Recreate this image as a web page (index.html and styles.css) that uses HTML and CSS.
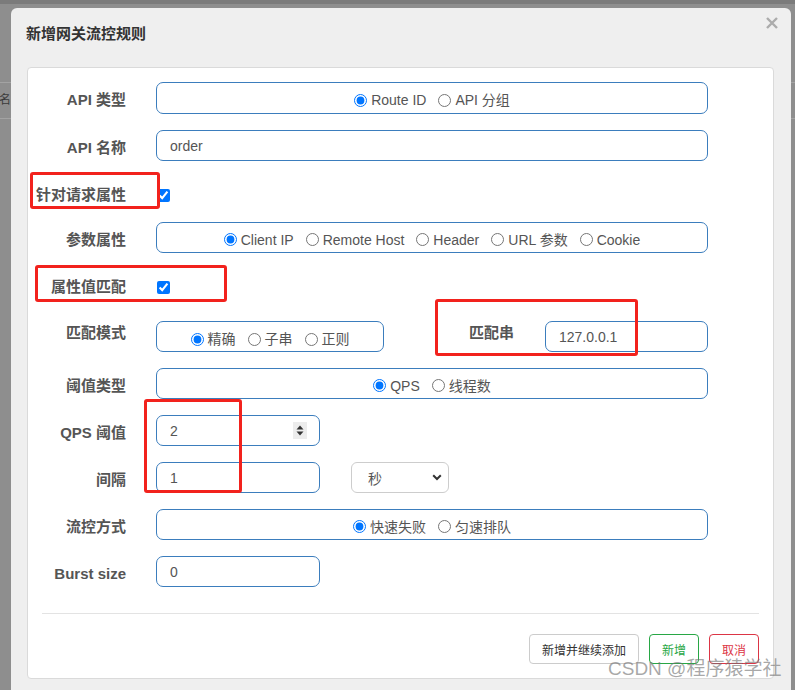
FILE: index.html
```html
<!DOCTYPE html>
<html>
<head>
<meta charset="utf-8">
<link rel="stylesheet" href="styles.css">
</head>
<body>
<div class="backdrop">
  <div class="bg-top"></div>
  <div class="bg-gap"></div>
  <div class="bg-head">名称</div>
</div>

<div class="modal">
  <div class="modal-header">
    <h4 class="modal-title">新增网关流控规则</h4>
    <svg class="close" width="12" height="12" viewBox="0 0 12 12"><path d="M1 1 L11 11 M11 1 L1 11" stroke="#acacac" stroke-width="2.4" fill="none"/></svg>
  </div>
  <div class="panel">
    <div class="form">
      <div class="row first">
        <label class="lbl">API 类型</label>
        <div class="box grow radios">
          <label class="opt"><input type="radio" name="apiType" checked>Route ID</label>
          <label class="opt"><input type="radio" name="apiType">API 分组</label>
        </div>
      </div>
      <div class="row">
        <label class="lbl">API 名称</label>
        <div class="box grow input">order</div>
      </div>
      <div class="row chk chk1">
        <label class="lbl">针对请求属性</label>
        <input class="cb" type="checkbox" checked>
      </div>
      <div class="row">
        <label class="lbl">参数属性</label>
        <div class="box grow radios">
          <label class="opt"><input type="radio" name="param" checked>Client IP</label>
          <label class="opt"><input type="radio" name="param">Remote Host</label>
          <label class="opt"><input type="radio" name="param">Header</label>
          <label class="opt"><input type="radio" name="param">URL 参数</label>
          <label class="opt"><input type="radio" name="param">Cookie</label>
        </div>
      </div>
      <div class="row chk chk2">
        <label class="lbl">属性值匹配</label>
        <input class="cb" type="checkbox" checked>
      </div>
      <div class="row match">
        <label class="lbl">匹配模式</label>
        <div class="box radios mode">
          <label class="opt"><input type="radio" name="mode" checked>精确</label>
          <label class="opt"><input type="radio" name="mode">子串</label>
          <label class="opt"><input type="radio" name="mode">正则</label>
        </div>
        <label class="lbl lbl-inline">匹配串</label>
        <div class="box input pattern">127.0.0.1</div>
      </div>
      <div class="row">
        <label class="lbl">阈值类型</label>
        <div class="box grow radios">
          <label class="opt"><input type="radio" name="grade" checked>QPS</label>
          <label class="opt"><input type="radio" name="grade">线程数</label>
        </div>
      </div>
      <div class="row">
        <label class="lbl">QPS 阈值</label>
        <div class="box input small">
          <span class="val">2</span>
          <svg class="spin" width="14" height="17" viewBox="0 0 14 17"><rect width="14" height="17" fill="#ececec"/><path d="M7 3.5 L10.5 7.5 L3.5 7.5 Z M7 13.5 L10.5 9.5 L3.5 9.5 Z" fill="#333"/></svg>
        </div>
      </div>
      <div class="row">
        <label class="lbl">间隔</label>
        <div class="box input small">1</div>
        <div class="select">
          <span>秒</span>
          <svg width="10" height="7" viewBox="0 0 10 7"><path d="M1.2 1.2 L5 5 L8.8 1.2" stroke="#333" stroke-width="2" fill="none"/></svg>
        </div>
      </div>
      <div class="row">
        <label class="lbl">流控方式</label>
        <div class="box grow radios">
          <label class="opt"><input type="radio" name="behavior" checked>快速失败</label>
          <label class="opt"><input type="radio" name="behavior">匀速排队</label>
        </div>
      </div>
      <div class="row last">
        <label class="lbl">Burst size</label>
        <div class="box input small">0</div>
      </div>
    </div>
    <div class="divider"></div>
    <div class="footer">
      <button class="btn">新增并继续添加</button>
      <button class="btn btn-green">新增</button>
      <button class="btn btn-red">取消</button>
    </div>
  </div>
</div>

<div class="mark m1"></div>
<div class="mark m2"></div>
<div class="mark m3"></div>
<div class="mark m4"></div>

<div class="watermark">CSDN @程序猿学社</div>
</body>
</html>
```

FILE: styles.css
```css
* { box-sizing: border-box; }
html, body { margin: 0; }
body {
  position: relative;
  width: 795px;
  height: 690px;
  overflow: hidden;
  background: #8e8e8e;
  font-family: "Liberation Sans", "Noto Sans CJK SC", sans-serif;
}

/* underlying page seen through the overlay */
.bg-top { height: 4px; background: #7b7b7b; }
.bg-gap { height: 79px; border-bottom: 1px solid #a3a3a3; }
.bg-head {
  height: 36px;
  border-bottom: 1px solid #a3a3a3;
  margin-left: -1px;
  font-size: 12px;
  line-height: 35px;
  color: #3a3a3a;
  white-space: nowrap;
}

/* modal */
.modal {
  position: absolute;
  left: 11px;
  top: 8px;
  width: 780px;
  height: 720px;
  background: #efefef;
  border-radius: 6px;
}
.modal-header { position: relative; padding: 16px 15px 23px; }
.modal-title {
  margin: 0;
  font-size: 15px;
  line-height: 20px;
  font-weight: bold;
  color: #333;
}
.close { position: absolute; right: 13px; top: 9px; }

.panel {
  margin: 0 17px 0 16px;
  background: #fff;
  border: 1px solid #dadada;
  border-radius: 4px;
  padding-top: 14px;
}
.form { padding-right: 65px; }

.row {
  display: flex;
  align-items: flex-start;
  margin-bottom: 16px;
}
.row.last { margin-bottom: 0; }
.row.first .box { height: 32px; }
.lbl {
  flex: none;
  width: 98px;
  margin-right: 30px;
  padding-top: 8px;
  text-align: right;
  font-size: 15px;
  line-height: 20px;
  font-weight: bold;
  color: #555;
}
.box {
  height: 31px;
  border: 1px solid #3b7dbd;
  border-radius: 7px;
  font-size: 14px;
  color: #555;
  background: #fff;
}
.grow { flex: 1; }
.radios {
  display: flex;
  justify-content: center;
  align-items: center;
  padding-top: 4px;
}
.opt {
  display: flex;
  align-items: center;
  margin-left: 12px;
  line-height: 20px;
}
.opt:first-child { margin-left: 0; }
.opt input {
  margin: 0 4px 0 0;
  width: 13px;
  height: 13px;
}
.input {
  display: flex;
  align-items: center;
  padding-left: 13px;
  line-height: 20px;
}

.chk1 { height: 29px; }
.chk2 { height: 31px; }
.cb { margin: 12px 0 0 1px; width: 13px; height: 13px; }

.match { height: 36px; }
.match .box { margin-top: 5px; }
.match .lbl { padding-top: 7px; }
.mode { width: 228px; padding-top: 5px; }
.lbl-inline { flex: 1; width: auto; margin-right: 0; padding-right: 31px; }
.pattern { width: 163px; }

.small { width: 164px; }
.val { flex: 1; }
.spin { margin-right: 12px; }

.select {
  display: flex;
  align-items: center;
  justify-content: space-between;
  width: 98px;
  height: 31px;
  margin-left: 31px;
  padding: 0 6px 0 16px;
  border: 1px solid #cdcdcd;
  border-radius: 6px;
  font-size: 14px;
  color: #555;
}

.divider { margin: 26px 14px 0; border-top: 1px solid #e3e3e3; }
.footer {
  display: flex;
  justify-content: flex-end;
  gap: 10px;
  padding: 20px 14px 14px;
}
.btn {
  height: 30px;
  padding: 0 12px;
  border: 1px solid #cccccc;
  border-radius: 4px;
  background: #fff;
  color: #333;
  font-family: "Liberation Sans", "Noto Sans CJK SC", sans-serif;
  font-size: 12px;
}
.btn-green { border-color: #28a745; color: #28a745; }
.btn-red { border-color: #dc3545; color: #dc3545; }

/* red annotation rectangles drawn over the screenshot */
.mark {
  position: absolute;
  border: 3px solid #f2221d;
  border-radius: 3px;
}
.m1 { left: 30px; top: 172px; width: 130px; height: 37px; }
.m2 { left: 35px; top: 265px; width: 192px; height: 37px; }
.m3 { left: 435px; top: 299px; width: 203px; height: 57px; }
.m4 { left: 144px; top: 399px; width: 98px; height: 94px; }

.watermark {
  position: absolute;
  left: 608px;
  top: 657px;
  font-size: 19px;
  line-height: 24px;
  color: rgba(110, 110, 110, 0.6);
  white-space: nowrap;
}
```
